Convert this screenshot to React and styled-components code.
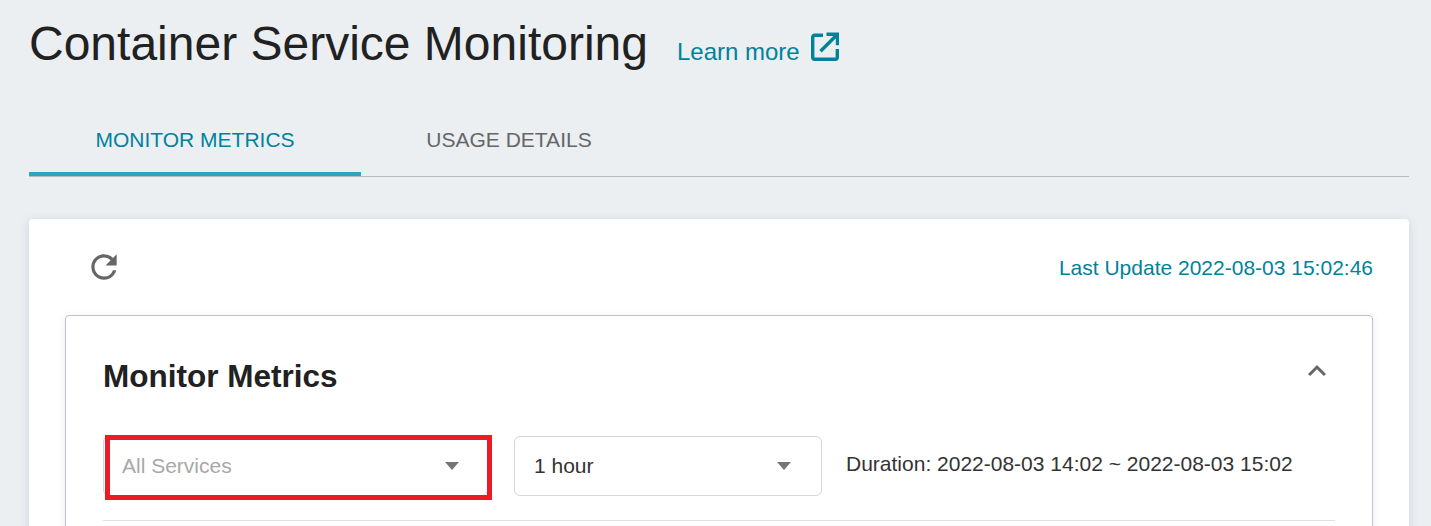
import React from "react";
import styled, { createGlobalStyle } from "styled-components";

const GlobalStyle = createGlobalStyle`
  html, body {
    margin: 0;
    height: 526px;
    overflow: hidden;
    background: #ebeff2;
    font-family: "Liberation Sans", Arial, sans-serif;
    color: #212121;
  }
`;

const Page = styled.div`
  padding: 0 22px 0 29px;
`;

const Header = styled.header`
  display: flex;
  align-items: center;
  height: 88px;
`;

const Title = styled.h1`
  margin: 0;
  font-size: 48px;
  font-weight: 400;
  line-height: 88px;
`;

const LearnMore = styled.a`
  display: flex;
  align-items: center;
  gap: 11px;
  margin: 15px 0 0 29px;
  font-size: 24px;
  color: #00829b;
`;

const ExternalIcon = styled.svg`
  width: 28px;
  height: 29px;
  margin-bottom: 10px;
  fill: none;
  stroke: #00829b;
  stroke-width: 3.4;
`;

const Tabs = styled.nav`
  display: flex;
  height: 89px;
  margin-bottom: 42px;
  border-bottom: 1px solid #b9bcbf;
  box-sizing: border-box;
`;

const Tab = styled.div`
  display: flex;
  justify-content: center;
  align-items: center;
  width: ${(props) => props.$width}px;
  height: 88px;
  box-sizing: border-box;
  padding-top: 19px;
  font-size: 21px;
  color: ${(props) => (props.$active ? "#00829b" : "#666666")};
  border-bottom: 4px solid ${(props) => (props.$active ? "#2ea5bf" : "transparent")};
`;

const Card = styled.section`
  height: 400px;
  padding: 0 36px;
  background: #ffffff;
  border-radius: 4px;
  box-shadow: 0 2px 10px rgba(60, 70, 90, 0.16);
`;

const Toolbar = styled.div`
  display: flex;
  justify-content: space-between;
  align-items: center;
  height: 96px;
  padding: 0 0 0 20px;
`;

const RefreshIcon = styled.svg`
  width: 38px;
  height: 38px;
  fill: #666666;
`;

const LastUpdate = styled.span`
  margin-top: 2px;
  font-size: 21px;
  color: #00829b;
`;

const Panel = styled.div`
  height: 300px;
  padding: 0 37px;
  border: 1px solid #bfc2cc;
  border-radius: 4px;
  box-shadow: 0 2px 8px rgba(60, 70, 90, 0.1);
`;

const PanelHeader = styled.div`
  display: flex;
  justify-content: space-between;
  align-items: center;
  height: 120px;
`;

const PanelTitle = styled.h2`
  margin: 0;
  font-size: 31.5px;
  font-weight: 700;
`;

const Chevron = styled.svg`
  width: 36px;
  height: 36px;
  margin-top: -10px;
  fill: #666666;
`;

const Filters = styled.div`
  display: flex;
  align-items: flex-start;
  height: 84px;
  border-bottom: 1px solid #e0e0e0;
`;

const SelectBox = styled.div`
  position: relative;
  display: flex;
  justify-content: space-between;
  align-items: center;
  width: ${(props) => props.$width}px;
  height: 60px;
  margin-right: ${(props) => props.$gap}px;
  padding: 0 ${(props) => props.$padRight}px 0 ${(props) => props.$pad}px;
  box-sizing: border-box;
  font-size: 21px;
  color: ${(props) => (props.$placeholder ? "#a8a8a8" : "#333333")};
  border: 1px solid #d6d6d6;
  border-radius: 6px;
`;

const Caret = styled.span`
  width: 0;
  height: 0;
  border-left: 7.5px solid transparent;
  border-right: 7.5px solid transparent;
  border-top: 8px solid #757575;
`;

const Highlight = styled.div`
  position: absolute;
  left: 1px;
  top: -2px;
  right: -5px;
  bottom: -5px;
  border: 5px solid #ed1c24;
  pointer-events: none;
`;

const Duration = styled.span`
  font-size: 21px;
  line-height: 56px;
  color: #333333;
`;

export default function App() {
  return (
    <Page>
      <GlobalStyle />
      <Header>
        <Title>Container Service Monitoring</Title>
        <LearnMore>
          Learn more
          <ExternalIcon viewBox="0 0 28 29">
            <path d="M12 3.2H3.7a2 2 0 0 0-2 2v20.1a2 2 0 0 0 2 2h20.6a2 2 0 0 0 2-2V17" />
            <path d="M15.5 2.2h11v11M26 2.7L9.5 19.2" />
          </ExternalIcon>
        </LearnMore>
      </Header>
      <Tabs>
        <Tab $active $width={332}>MONITOR METRICS</Tab>
        <Tab $width={296}>USAGE DETAILS</Tab>
      </Tabs>
      <Card>
        <Toolbar>
          <RefreshIcon viewBox="0 0 24 24">
            <path d="M17.65 6.35A7.958 7.958 0 0 0 12 4c-4.42 0-7.99 3.58-7.99 8s3.57 8 7.99 8c3.73 0 6.84-2.55 7.73-6h-2.08A5.99 5.99 0 0 1 12 18c-3.31 0-6-2.69-6-6s2.69-6 6-6c1.66 0 3.14.69 4.22 1.78L13 11h7V4l-2.35 2.35z" />
          </RefreshIcon>
          <LastUpdate>Last Update 2022-08-03 15:02:46</LastUpdate>
        </Toolbar>
        <Panel>
          <PanelHeader>
            <PanelTitle>Monitor Metrics</PanelTitle>
            <Chevron viewBox="0 0 24 24">
              <path d="M12 8l-6 6 1.41 1.41L12 10.83l4.59 4.58L18 14z" />
            </Chevron>
          </PanelHeader>
          <Filters>
            <SelectBox $placeholder $width={385} $gap={26} $pad={18} $padRight={28}>
              All Services
              <Caret />
              <Highlight />
            </SelectBox>
            <SelectBox $width={308} $gap={24} $pad={19} $padRight={30}>
              1 hour
              <Caret />
            </SelectBox>
            <Duration>Duration: 2022-08-03 14:02 ~ 2022-08-03 15:02</Duration>
          </Filters>
        </Panel>
      </Card>
    </Page>
  );
}
